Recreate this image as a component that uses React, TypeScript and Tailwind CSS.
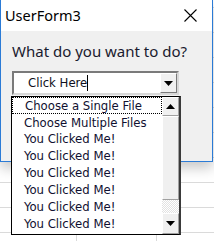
import { Fragment } from 'react'

const items = [
  'Choose a Single File',
  'Choose Multiple Files',
  'You Clicked Me!',
  'You Clicked Me!',
  'You Clicked Me!',
  'You Clicked Me!',
  'You Clicked Me!',
  'You Clicked Me!',
]

const tahoma = "font-['DejaVu_Sans_Condensed','DejaVu_Sans',sans-serif]"

function Arrow({ up }: { up?: boolean }) {
  return (
    <svg width="9" height="5" viewBox="0 0 9 5" className={up ? 'rotate-180' : ''}>
      <path d="M0 0h9L4.5 5z" fill="#000" />
    </svg>
  )
}

function ScrollButton({ up, h }: { up?: boolean; h: string }) {
  return (
    <div
      className={`${h} flex items-center justify-center bg-[#f0f0f0] border border-t-white border-l-white border-r-[#a0a0a0] border-b-[#a0a0a0]`}
    >
      <Arrow up={up} />
    </div>
  )
}

export default function App() {
  return (
    <div className="relative w-[214px] h-[241px] overflow-hidden bg-white bg-[linear-gradient(#dadada_1px,transparent_1px),linear-gradient(90deg,#dadada_1px,transparent_1px)] bg-[size:80px_25px] bg-[position:76px_7px] font-['Noto_Sans','Open_Sans',sans-serif]">
      <div className="w-[213px] border-x border-b border-[#2b7bd6] shadow-[0_6px_12px_rgba(0,0,0,0.22)]">
        <div className="h-[31px] bg-white flex items-center justify-between pl-[4px] pr-[15px]">
          <span className="text-[14.5px] text-black leading-none">UserForm3</span>
          <svg width="13" height="13" viewBox="0 0 13 13">
            <path d="M0.5 0.5l12 12M12.5 0.5l-12 12" stroke="#000" strokeWidth="1.1" />
          </svg>
        </div>
        <div className="h-[130px] bg-[#f0f0f0] pl-[11px] pt-[10px]">
          <p className="text-[15px] leading-[20px] text-[#1a1a2e]">What do you want to do?</p>
          <div className="mt-[10px] w-[167px] h-[24px] flex border-2 border-t-[#7a7a7a] border-l-[#7a7a7a] border-r-[#d8d8d8] border-b-[#d8d8d8] bg-white">
            <div className={`flex-1 flex items-center pl-[14px] text-[13px] text-[#101020] ${tahoma}`}>
              <span>Click Here</span>
              <span className="w-px h-[16px] bg-black" />
            </div>
            <div className="w-[17px] flex items-center justify-center bg-[#f0f0f0] border border-t-white border-l-white border-r-[#7a7a7a] border-b-[#7a7a7a]">
              <Arrow />
            </div>
          </div>
        </div>
      </div>

      <div className={`absolute left-[11px] top-[96px] w-[170px] h-[139px] flex bg-white border border-black border-r-2 border-r-[#3a3a3a] ${tahoma}`}>
        <div className="flex-1 flex flex-col">
          {items.map((t, i) => (
            <Fragment key={i}>
              <div
                className={`h-[16.9px] flex items-center pl-[12px] text-[13px] text-[#101030] whitespace-nowrap ${
                  i === 0 ? 'border border-dotted border-black pl-[11px]' : ''
                }`}
              >
                {t}
              </div>
            </Fragment>
          ))}
        </div>
        <div className="w-[17px] flex flex-col">
          <ScrollButton up h="h-[19px]" />
          <div className="h-[84px] bg-[#f0f0f0] border border-t-white border-l-white border-r-[#a0a0a0] border-b-[#a0a0a0]" />
          <div className="flex-1 bg-[#f4f4f4] bg-[repeating-conic-gradient(#e2e2e2_0_25%,#ffffff_0_50%)] bg-[size:2px_2px]" />
          <ScrollButton h="h-[21px]" />
        </div>
      </div>
    </div>
  )
}
